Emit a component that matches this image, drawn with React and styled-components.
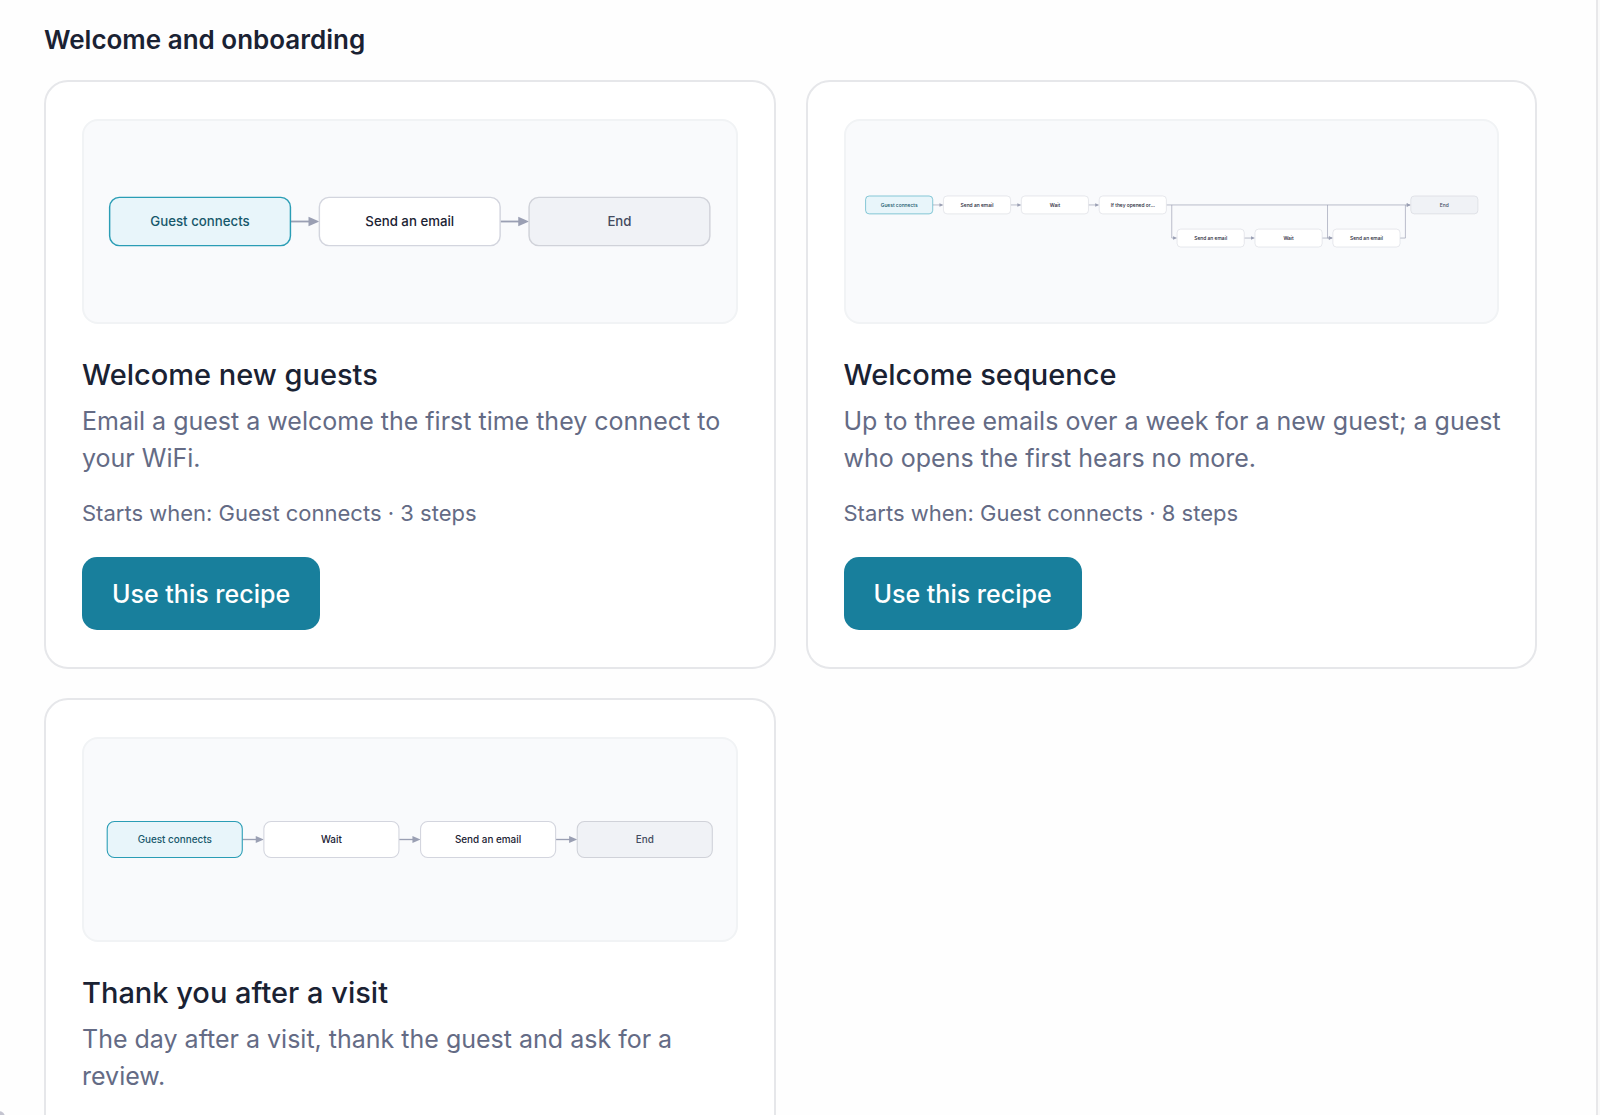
import React from "react";
import styled, { createGlobalStyle } from "styled-components";

const GlobalStyle = createGlobalStyle`
  *, *::before, *::after { box-sizing: border-box; }
  html { background: #fafafa; }
  body {
    margin: 0;
    font-family: Inter, "Liberation Sans", sans-serif;
    color: #1a2233;
  }
`;

const Page = styled.main`
  min-height: 100vh;
  margin-right: 2px;
  padding: 20px 59px 44px 44px;
  border-right: 2px solid #e8e8ea;
  background: #fefefe;
`;

const SectionTitle = styled.h2`
  margin: 0 0 20px;
  font-size: 26px;
  line-height: 40px;
  font-weight: 600;
`;

const Grid = styled.div`
  display: grid;
  grid-template-columns: repeat(2, minmax(0, 1fr));
  gap: 29px 30px;
`;

const Card = styled.article`
  display: flex;
  flex-direction: column;
  align-items: flex-start;
  padding: 37px 36px;
  border: 2px solid #e6e7ea;
  border-radius: 24px;
  background: #fff;
`;

const Preview = styled.div`
  width: 100%;
  height: 205px;
  padding: 16px;
  border: 2px solid #f1f3f5;
  border-radius: 16px;
  background: #f9fafc;
`;

const Diagram = styled.svg`
  display: block;
  width: 100%;
  height: 100%;
`;

const tones = {
  trigger: { fill: "#e8f5fa", stroke: "#2a9db5", text: "#17586b" },
  step: { fill: "#ffffff", stroke: "#d3d5de", text: "#1a2233" },
  end: { fill: "#f0f2f6", stroke: "#d0d2d9", text: "#444b60" },
};

const NodeBox = styled.rect`
  fill: ${(p) => tones[p.$tone].fill};
  stroke: ${(p) => tones[p.$tone].stroke};
`;

const NodeLabel = styled.text`
  fill: ${(p) => tones[p.$tone].text};
  font-size: 11px;
  font-weight: 500;
  text-anchor: middle;
`;

const Edge = styled.path`
  fill: none;
  stroke: #9a9fb3;
`;

const ArrowHead = styled.path`
  fill: #9a9fb3;
`;

const CardTitle = styled.h3`
  margin: 31px 0 0;
  font-size: 29px;
  line-height: 40px;
  font-weight: 500;
`;

const Description = styled.p`
  margin: 8px -12px 0 0;
  font-size: 25px;
  line-height: 37px;
  color: #646b85;
`;

const Meta = styled.p`
  margin: 20px 0 0;
  font-size: 22px;
  line-height: 32px;
  color: #646b85;
`;

const UseButton = styled.button`
  height: 73px;
  margin-top: 28px;
  padding: 0 30px;
  border: 0;
  border-radius: 15px;
  background: #187f9c;
  color: #fff;
  font: 500 25px/36px Inter, "Liberation Sans", sans-serif;
  cursor: pointer;
`;

const CornerDot = styled.span`
  position: fixed;
  left: -7px;
  bottom: -8px;
  width: 12px;
  height: 12px;
  border-radius: 50%;
  background: #c4c4d0;
`;

const NODE_W = 150;
const NODE_H = 40;
const COL = 174;
const ROW = 74;
const PAD = 8;

const left = (col) => PAD + col * COL;
const mid = (row) => PAD + row * ROW + NODE_H / 2;

function edgePath([fromCol, fromRow, toCol, toRow]) {
  const x1 = left(fromCol) + NODE_W;
  const x2 = left(toCol);
  const y1 = mid(fromRow);
  const y2 = mid(toRow);
  if (y1 === y2) return `M${x1} ${y1}H${x2 - 4}`;
  // A branch leaves the upper line just before its target column.
  if (y2 > y1) return `M${x2 - 12} ${y1}V${y2}H${x2 - 4}`;
  return `M${x1} ${y1}H${x2 - 12}V${y2}`;
}

function Flow({ label, nodes, edges }) {
  const cols = Math.max(...nodes.map((n) => n.col)) + 1;
  const rows = Math.max(...nodes.map((n) => n.row || 0)) + 1;
  const width = (cols - 1) * COL + NODE_W + PAD * 2;
  const height = (rows - 1) * ROW + NODE_H + PAD * 2;
  return (
    <Diagram viewBox={`0 0 ${width} ${height}`} role="img" aria-label={label}>
      {edges.map((e) => (
        <g key={e.join("-")}>
          <Edge d={edgePath(e)} strokeWidth="1.5" />
          <ArrowHead d={`M${left(e[2]) - 9} ${mid(e[3]) - 4}l9 4l-9 4z`} />
        </g>
      ))}
      {nodes.map(({ col, row = 0, tone = "step", text }) => (
        <g key={`${col}-${row}`}>
          <NodeBox $tone={tone} x={left(col)} y={mid(row) - NODE_H / 2} width={NODE_W} height={NODE_H} rx="8" strokeWidth="1.2" />
          <NodeLabel $tone={tone} x={left(col) + NODE_W / 2} y={mid(row) + 4}>
            {text}
          </NodeLabel>
        </g>
      ))}
    </Diagram>
  );
}

const recipes = [
  {
    title: "Welcome new guests",
    description: "Email a guest a welcome the first time they connect to your WiFi.",
    steps: 3,
    nodes: [
      { col: 0, tone: "trigger", text: "Guest connects" },
      { col: 1, text: "Send an email" },
      { col: 2, tone: "end", text: "End" },
    ],
    edges: [[0, 0, 1, 0], [1, 0, 2, 0]],
  },
  {
    title: "Welcome sequence",
    description: "Up to three emails over a week for a new guest; a guest who opens the first hears no more.",
    steps: 8,
    nodes: [
      { col: 0, tone: "trigger", text: "Guest connects" },
      { col: 1, text: "Send an email" },
      { col: 2, text: "Wait" },
      { col: 3, text: "If they opened or…" },
      { col: 4, row: 1, text: "Send an email" },
      { col: 5, row: 1, text: "Wait" },
      { col: 6, row: 1, text: "Send an email" },
      { col: 7, tone: "end", text: "End" },
    ],
    edges: [
      [0, 0, 1, 0],
      [1, 0, 2, 0],
      [2, 0, 3, 0],
      [3, 0, 7, 0],
      [3, 0, 4, 1],
      [4, 1, 5, 1],
      [5, 1, 6, 1],
      [3, 0, 6, 1],
      [6, 1, 7, 0],
    ],
  },
  {
    title: "Thank you after a visit",
    description: "The day after a visit, thank the guest and ask for a review.",
    steps: 4,
    nodes: [
      { col: 0, tone: "trigger", text: "Guest connects" },
      { col: 1, text: "Wait" },
      { col: 2, text: "Send an email" },
      { col: 3, tone: "end", text: "End" },
    ],
    edges: [[0, 0, 1, 0], [1, 0, 2, 0], [2, 0, 3, 0]],
  },
];

export default function App() {
  return (
    <>
      <GlobalStyle />
      <Page>
        <SectionTitle>Welcome and onboarding</SectionTitle>
        <Grid>
          {recipes.map((r) => (
            <Card key={r.title}>
              <Preview>
                <Flow label={r.title} nodes={r.nodes} edges={r.edges} />
              </Preview>
              <CardTitle>{r.title}</CardTitle>
              <Description>{r.description}</Description>
              <Meta>Starts when: Guest connects · {r.steps} steps</Meta>
              <UseButton type="button">Use this recipe</UseButton>
            </Card>
          ))}
        </Grid>
      </Page>
      <CornerDot aria-hidden="true" />
    </>
  );
}
